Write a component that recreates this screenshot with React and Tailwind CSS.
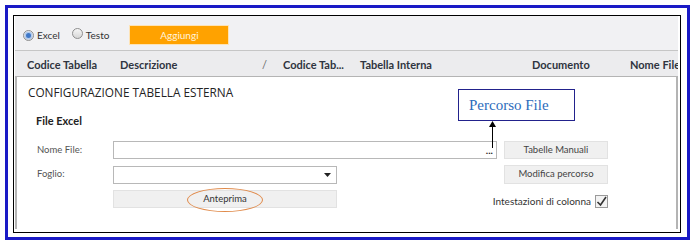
import React from "react";

function Radio({ checked }) {
  return (
    <span className="relative inline-flex h-[11px] w-[11px] items-center justify-center rounded-full border border-[#8e8e8e] bg-gradient-to-b from-[#f6f6f6] to-[#d6d6d6]">
      {checked && <span className="h-[5px] w-[5px] rounded-full bg-[#3f78c8] ring-[1.5px] ring-[#b3cbec]" />}
    </span>
  );
}

export default function App() {
  const ui = "font-['Lato','Open_Sans',sans-serif]";
  return (
    <div className={`h-[247px] w-[695px] bg-white pl-[5px] pt-[5px] ${ui}`}>
      <div className="h-[235px] w-[685px] border-[3px] border-[#1a1ac6] pb-[4px] pl-[5px] pr-[6px] pt-[7px]">
        <div className="flex h-[218px] w-[668px] flex-col border border-black pl-[1px] pr-[2px]">
          {/* toolbar */}
          <div className="flex h-[35px] shrink-0 items-center border-b border-[#c6c6c6] bg-[#f1f1f3] pl-[8px] pt-[4px] text-[10px] text-[#333]">
            <div className="mt-[1px] flex items-center">
              <Radio checked />
              <span className="ml-[3px]">Excel</span>
              <span className="ml-[12px]"><Radio /></span>
              <span className="ml-[3px]">Testo</span>
            </div>
            <div className="ml-[20px] flex h-[20px] w-[100px] items-center justify-center border border-[#fde3b6] bg-[#ffa200] text-[10px] text-[#fff3dc]">
              Aggiungi
            </div>
          </div>
          {/* header */}
          <div className="flex h-[25px] shrink-0 items-center whitespace-nowrap bg-[#ececee] pl-[12px] pt-[3px] text-[11px] font-bold text-[#2f3440]">
            <div className="w-[93px]">Codice Tabella</div>
            <div className="w-[142px]">Descrizione</div>
            <div className="w-[21px] font-normal text-[#666]">/</div>
            <div className="w-[77px]">Codice Tab...</div>
            <div className="w-[172px]">Tabella Interna</div>
            <div className="w-[98px]">Documento</div>
            <div className="flex-1 overflow-hidden">Nome File</div>
          </div>
          {/* panel */}
          <div className="relative h-[153px] shrink-0 border-x-2 border-t border-[#b4b4b4] bg-white pl-[11px] pt-[7px]">
            <div className="h-[16px] font-['Open_Sans',sans-serif] text-[11.8px] leading-[16px] text-[#222]">CONFIGURAZIONE TABELLA ESTERNA</div>
            <div className="ml-[8px] mt-[14px] h-[14px] text-[11px] font-bold leading-[14px] text-[#222]">File Excel</div>
            <div className="ml-[9px] mt-[13px] text-[9.5px] text-[#444]">
              <div className="flex h-[18px] items-center">
                <div className="w-[76px] text-[#555]">Nome File:</div>
                <div className="relative flex h-[18px] w-[384px] items-center justify-end border border-[#b8b8b8] bg-white pr-[3px]">
                  <span className="text-[10px] font-bold leading-none text-[#222]">...</span>
                </div>
                <div className="ml-[7px] flex h-[18px] w-[104px] items-center justify-center border border-[#e2e2e2] bg-[#f0f0f0]">Tabelle Manuali</div>
              </div>
              <div className="mt-[6px] flex h-[19px] items-center">
                <div className="w-[76px] text-[#555]">Foglio:</div>
                <div className="flex h-[18px] w-[224px] items-center justify-end border border-[#b8b8b8] bg-white pr-[5px]">
                  <svg width="7" height="4" viewBox="0 0 7 4"><path d="M0 0h7L3.5 4z" fill="#222" /></svg>
                </div>
                <div className="ml-[167px] flex h-[19px] w-[104px] items-center justify-center border border-[#e2e2e2] bg-[#f0f0f0]">Modifica percorso</div>
              </div>
              <div className="mt-[6px] flex h-[18px] items-start">
                <div className="w-[76px]" />
                <div className="relative flex h-[18px] w-[224px] items-center justify-center border border-[#e2e2e2] bg-[#f0f0f0] text-[#333]">
                  Anteprima
                  <div className="absolute left-[73px] top-[-3px] h-[24px] w-[76px] rounded-[50%] border border-[#e08a4a]" />
                </div>
                <div className="mt-[4px] flex w-[271px] items-center justify-end text-[10px] text-[#333]">
                  <span>Intestazioni di colonna</span>
                  <span className="ml-[4px] flex h-[13px] w-[13px] items-center justify-center border border-[#9a9a9a] bg-[#f3f3f3]">
                    <svg width="11" height="11" viewBox="0 0 11 11"><path d="M1.5 6l3 3L10 1" stroke="#333" strokeWidth="1.6" fill="none" /></svg>
                  </span>
                </div>
              </div>
            </div>
            {/* callout */}
            <div className="absolute left-[441px] top-[12px] flex h-[32px] w-[117px] items-center border border-[#22228c] bg-white pl-[10px] font-['Liberation_Serif',serif] text-[15px] text-[#2c6cbc]">
              Percorso File
            </div>
            <div className="absolute left-[472px] top-[44px] flex flex-col items-center">
              <svg width="7" height="6" viewBox="0 0 7 6"><path d="M3.5 0L7 6H0z" fill="#000" /></svg>
              <div className="h-[21px] w-[1px] bg-black" />
            </div>
          </div>
        </div>
      </div>
    </div>
  );
}
